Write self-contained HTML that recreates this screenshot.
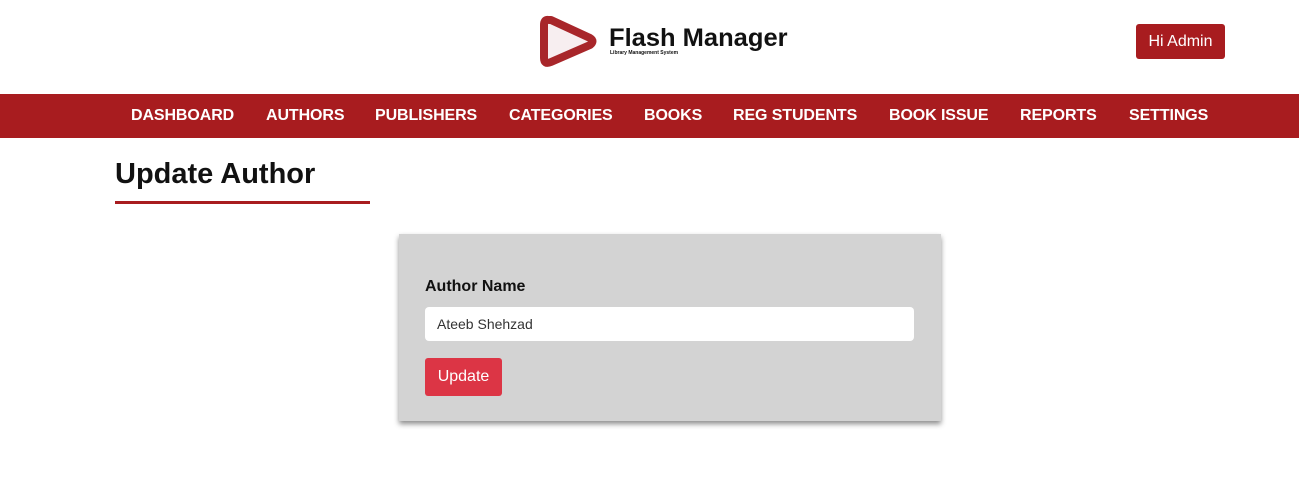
<!DOCTYPE html>
<html><head><style>
body{margin:0;width:1299px;height:489px;background:#fff;font-family:"Liberation Sans",Arial,sans-serif;position:relative;overflow:hidden}
.nav{position:absolute;top:94px;left:0;width:1299px;height:44px;background:#a81c1f}
.nav span{position:absolute;top:13px;color:#fff;font-weight:bold;font-size:16px;letter-spacing:-0.1px}
</style></head><body>
<svg style="position:absolute;left:536px;top:12px" width="64" height="58" viewBox="0 0 64 58">
<path d="M13 8 Q8 7 8 13 L8 46 Q8 53 15 50 L54 33 Q59 29 54 26 L15 8 Z" fill="#f7eef0" stroke="#a8262a" stroke-width="8" stroke-linejoin="round"/>
</svg>
<div style="position:absolute;left:609px;top:24px;font-size:25px;font-weight:bold;color:#111;transform:scaleX(1.02);transform-origin:left">Flash Manager</div>
<div style="position:absolute;left:610px;top:50px;font-size:5px;font-weight:bold;color:#111">Library Management System</div>
<div style="position:absolute;left:1136px;top:24px;width:89px;height:35px;background:#a81c1f;border-radius:3px;color:#fff;font-size:16px;line-height:35px;text-align:center">Hi Admin</div>
<div class="nav">
<span style="left:131px">DASHBOARD</span><span style="left:266px">AUTHORS</span><span style="left:375px">PUBLISHERS</span><span style="left:509px">CATEGORIES</span><span style="left:644px">BOOKS</span><span style="left:733px">REG STUDENTS</span><span style="left:889px">BOOK ISSUE</span><span style="left:1020px">REPORTS</span><span style="left:1129px">SETTINGS</span>
</div>
<div style="position:absolute;left:115px;top:158px;font-size:29px;font-weight:bold;color:#111">Update Author</div>
<div style="position:absolute;left:115px;top:201px;width:255px;height:3px;background:#a81c1f"></div>
<div style="position:absolute;left:399px;top:234px;width:542px;height:187px;background:#d3d3d3;box-shadow:0 3px 5px rgba(0,0,0,.45)">
<div style="position:absolute;left:26px;top:44px;font-size:16px;font-weight:bold;color:#111">Author Name</div>
<div style="position:absolute;left:26px;top:73px;width:489px;height:34px;background:#fff;border-radius:4px;font-size:14px;line-height:35px;color:#333;box-sizing:border-box;padding-left:12px">Ateeb Shehzad</div>
<div style="position:absolute;left:26px;top:124px;width:77px;height:38px;background:#dc3545;border-radius:3px;color:#fff;font-size:16px;line-height:38px;text-align:center">Update</div>
</div>
</body></html>
